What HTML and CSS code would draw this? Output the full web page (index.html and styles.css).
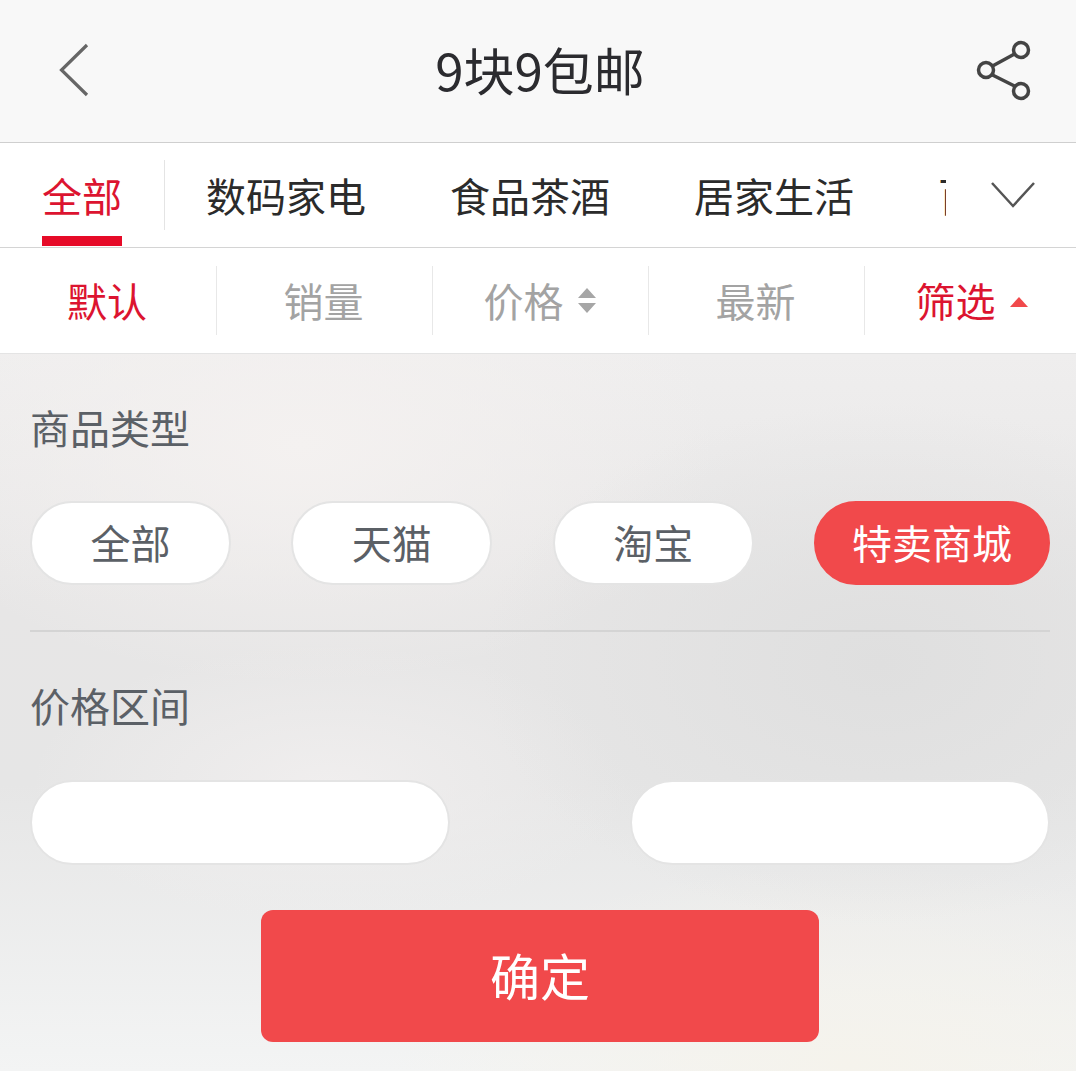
FILE: index.html
```html
<!DOCTYPE html>
<html lang="zh-CN">
<head>
    <meta charset="UTF-8">
    <meta name="viewport" content="width=device-width, initial-scale=1.0">
    <title>9块9包邮</title>
    <link rel="stylesheet" href="styles.css">
</head>
<body>
    <header class="topbar">
        <div class="topbar-side">
            <svg class="back-icon" width="32" height="56" viewBox="0 0 32 56">
                <path d="M28 2 L2.500 27 L28 52" fill="none" stroke="#666" stroke-width="3.200"/>
            </svg>
        </div>
        <h1 class="title">9块9包邮</h1>
        <div class="topbar-side topbar-right">
            <svg class="share-icon" width="58" height="64" viewBox="0 0 58 64">
                <circle cx="47" cy="11" r="7.500" fill="none" stroke="#444" stroke-width="3.500"/>
                <circle cx="12" cy="31" r="7.500" fill="none" stroke="#444" stroke-width="3.500"/>
                <circle cx="47" cy="52" r="7.500" fill="none" stroke="#444" stroke-width="3.500"/>
                <path d="M18.500 27 L40.500 15 M18.500 36 L40.500 47" fill="none" stroke="#444" stroke-width="3.500"/>
            </svg>
        </div>
    </header>

    <nav class="tabs">
        <div class="tab-list">
            <a class="tab tab-first active">全部</a>
            <a class="tab">数码家电</a>
            <a class="tab">食品茶酒</a>
            <a class="tab">居家生活</a>
            <a class="tab">百货美妆</a>
        </div>
        <div class="tab-more">
            <svg width="46" height="28" viewBox="0 0 46 28">
                <path d="M2 2 L23 25 L44 2" fill="none" stroke="#555" stroke-width="2.500"/>
            </svg>
        </div>
    </nav>

    <div class="sortbar">
        <div class="sort-item red">默认</div>
        <div class="sort-item">销量</div>
        <div class="sort-item">价格
            <svg class="sort-arrows" width="18" height="26" viewBox="0 0 18 26">
                <path d="M9 0 L18 10 H0 Z M0 15 H18 L9 25 Z" fill="#a6a6a6"/>
            </svg>
        </div>
        <div class="sort-item">最新</div>
        <div class="sort-item red">筛选
            <svg class="filter-arrow" width="18" height="10" viewBox="0 0 18 10">
                <path d="M9 0 L18 10 H0 Z" fill="#f1494b"/>
            </svg>
        </div>
    </div>

    <main class="panel">
        <section class="group group-type">
            <h2 class="group-title">商品类型</h2>
            <div class="chips">
                <span class="chip">全部</span>
                <span class="chip">天猫</span>
                <span class="chip">淘宝</span>
                <span class="chip chip-on">特卖商城</span>
            </div>
        </section>
        <section class="group">
            <h2 class="group-title">价格区间</h2>
            <div class="price-row">
                <input class="price-input" type="text">
                <input class="price-input" type="text">
            </div>
        </section>
        <button class="confirm">确定</button>
    </main>
</body>
</html>
```

FILE: styles.css
```css
* {
    box-sizing: border-box;
}
html, body {
    height: 100%;
}
body {
    margin: 0;
    height: 1071px;
    overflow: hidden;
    display: flex;
    flex-direction: column;
    font-family: "Noto Sans CJK SC", "Noto Sans", sans-serif;
    background: #fff;
}
.topbar {
    height: 143px;
    flex: none;
    display: flex;
    align-items: center;
    justify-content: space-between;
    padding: 0 44px 0 59px;
    background: #f8f8f8;
    border-bottom: 1px solid #cfcfcf;
}
.topbar-side {
    width: 58px;
    display: flex;
}
.topbar-right {
    justify-content: flex-end;
}
.title {
    margin: 0 11px 5px 0;
    font-size: 51px;
    font-weight: 400;
    color: #2b2b2f;
}
.back-icon {
    margin-top: -1px;
}
.share-icon {
    margin-top: -1px;
}
.tabs {
    height: 105px;
    flex: none;
    display: flex;
    background: #fff;
    border-bottom: 1px solid #d4d4d4;
}
.tab-list {
    width: 946px;
    flex: none;
    display: flex;
    overflow: hidden;
}
.tab {
    flex: none;
    height: 104px;
    line-height: 104px;
    margin-right: 84px;
    font-size: 40px;
    color: #2b2b2b;
    white-space: nowrap;
}
.tab-first {
    position: relative;
    margin-left: 42px;
    height: 103px;
    border-bottom: 10px solid #e60b28;
}
.tab-first::after {
    content: "";
    position: absolute;
    right: -43px;
    top: 17px;
    height: 70px;
    border-right: 1px solid #e4e4e4;
}
.tab.active {
    color: #dc1430;
}
.tab-more {
    flex: 1;
    padding: 38px 0 0 44px;
}
.sortbar {
    height: 106px;
    flex: none;
    display: grid;
    grid-template-columns: repeat(5, 216px);
    padding: 18px 0;
    background: #fff;
    border-bottom: 1px solid #e4e4e4;
}
.sort-item {
    display: flex;
    align-items: center;
    justify-content: center;
    gap: 14px;
    padding: 0 2px 2px 0;
    font-size: 40px;
    color: #a3a3a3;
    border-left: 1px solid #e8e8e8;
}
.sort-item:first-child {
    border-left: none;
}
.sort-item.red {
    color: #dc1430;
}
.sort-arrows {
    margin-top: 2px;
}
.filter-arrow {
    margin-top: 4px;
}
.panel {
    flex: 1;
    padding: 0 26px 0 30px;
    background:
        radial-gradient(ellipse 400px 260px at 880px 310px, #dfdfdf, rgba(223, 223, 223, 0)),
        radial-gradient(ellipse 420px 240px at 300px 90px, #f4f1f0, rgba(244, 241, 240, 0)),
        radial-gradient(ellipse 300px 140px at 330px 430px, #f0eeee, rgba(240, 238, 238, 0)),
        radial-gradient(ellipse 460px 200px at 850px 710px, #f5f3ec, rgba(245, 243, 236, 0)),
        linear-gradient(#efeeee, #e7e6e6 35%, #e6e6e6 60%, #f3f4f4 100%);
}
.group-type {
    height: 278px;
    width: 1020px;
    border-bottom: 2px solid #d4d4d4;
}
.group-title {
    margin: 0;
    padding-top: 44px;
    font-size: 40px;
    line-height: 58px;
    font-weight: 400;
    color: #5b6066;
}
.group {
    width: 1020px;
}
.chips {
    display: flex;
    justify-content: space-between;
    margin-top: 45px;
}
.chip {
    width: 201px;
    height: 84px;
    line-height: 78px;
    text-align: center;
    font-size: 40px;
    color: #5b6066;
    background: #fff;
    border: 2px solid #e4e4e4;
    border-radius: 42px;
}
.chip-on {
    width: 236px;
    color: #fff;
    background: #f1494b;
    border-color: #f1494b;
}
.price-row {
    display: flex;
    justify-content: space-between;
    margin-top: 46px;
}
.price-input {
    width: 420px;
    height: 85px;
    border: 2px solid #e4e4e4;
    border-radius: 43px;
    background: #fff;
    outline: none;
}
.confirm {
    display: block;
    width: 558px;
    height: 132px;
    margin: 45px 0 0 231px;
    padding: 0 0 4px;
    border: none;
    border-radius: 12px;
    background: #f1494b;
    color: #fff;
    font-family: inherit;
    font-size: 50px;
}
```
